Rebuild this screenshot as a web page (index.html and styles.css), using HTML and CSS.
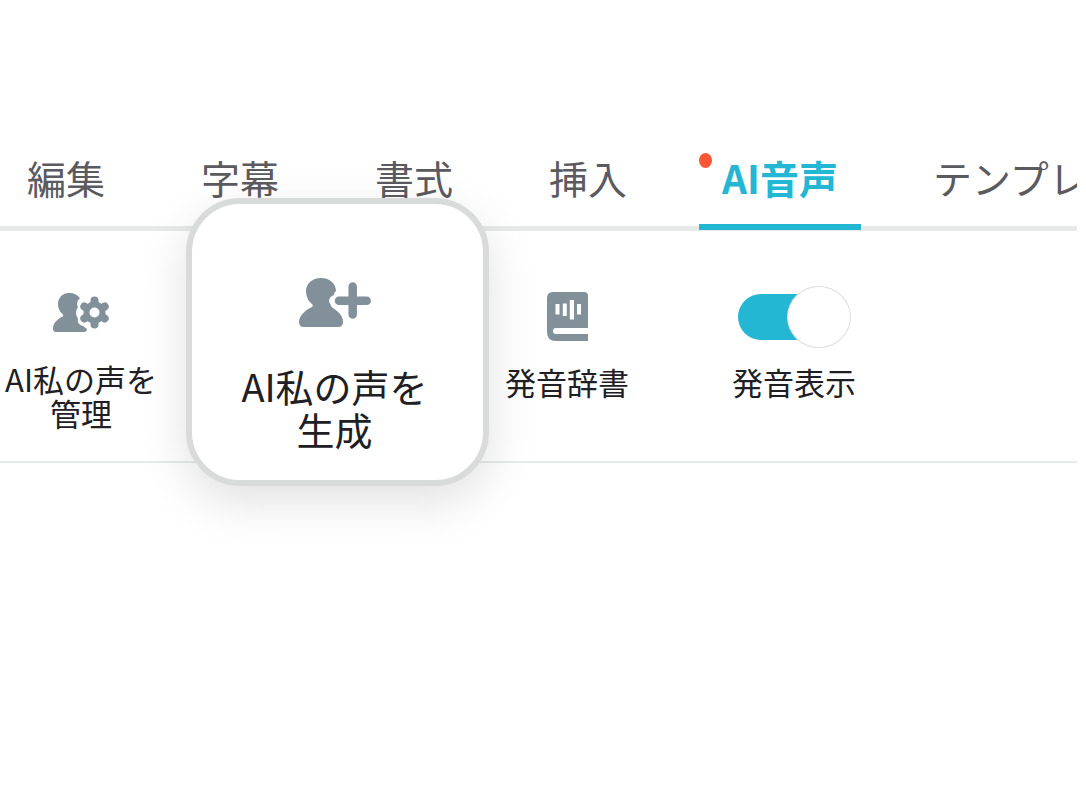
FILE: index.html
```html
<!DOCTYPE html>
<html lang="ja">
<head>
<meta charset="utf-8">
<title>AI音声</title>
<link rel="stylesheet" href="styles.css">
</head>
<body>
<div class="app">
  <nav class="tabs">
    <button class="tab" type="button">編集</button>
    <button class="tab" type="button">字幕</button>
    <button class="tab" type="button">書式</button>
    <button class="tab" type="button">挿入</button>
    <button class="tab tab-active" type="button">AI音声</button>
    <button class="tab" type="button">テンプレ</button>
  </nav>
  <div class="toolbar">
    <button class="tool tool-manage" type="button">
      <span class="tool-icon">
        <svg width="58" height="41" viewBox="0 0 58 41" aria-hidden="true">
          <path fill="currentColor" d="M17 1C22 1 26 3 28 6.500C25 8 24.500 12 26 15.500C23.500 18 23.500 23 26 26.500C25 30 27 33 31 34L35 37Q35 40 32 40H4Q1 40 1 36.500C1 31 6 26.500 11 24.500C11.500 23.500 11 22.500 10 21.500C7 19 6 15 6 12C6 5.500 11 1 17 1Z"/>
          <g transform="translate(42.500 20.500)" fill="none" stroke="currentColor">
            <circle r="8" stroke-width="6"/>
            <path stroke-width="8" stroke-linecap="round" d="M0-9.500V-12M0 9.500V12M8.200-4.800L10.200-6M8.200 4.800L10.200 6M-8.200-4.800L-10.200-6M-8.200 4.800L-10.200 6"/>
          </g>
        </svg>
      </span>
      <span class="tool-label">AI私の声を<br>管理</span>
    </button>
    <div class="slot">
      <button class="card" type="button">
        <svg width="72" height="50" viewBox="0 0 72 50" aria-hidden="true">
          <path fill="currentColor" d="M22 0C31 0 37 6 37 13C35 15 35 16 35 17C32 18 30 20 30 23C30 25 32 26 32 28C33 30 36 31 38 33C42 36 44 40 44 44Q44 49 39 49H5Q0 49 0 44C0 37 8 31 13 29C14 28 14 27 13 26C9 23 7 18 7 13C7 6 13 0 22 0Z"/>
          <path fill="none" stroke="currentColor" stroke-width="8.500" stroke-linecap="round" d="M40 22.700H67.700M53.700 8.500V36.500"/>
        </svg>
        <span class="card-label">AI私の声を<br>生成</span>
      </button>
    </div>
    <button class="tool" type="button">
      <span class="tool-icon">
        <svg width="41" height="49" viewBox="0 0 41 49" aria-hidden="true">
          <path fill="currentColor" fill-rule="evenodd" d="M6 0H37Q41 0 41 4V36H9Q6 36 6 39T9 42H41V49H9Q0 49 0 40V6Q0 0 6 0ZM8.500 12V22.500H12.500V12ZM15.800 11.500V24H19.800V11.500ZM22.800 8V27.500H27V8ZM30 12V22.500H34V12Z"/>
        </svg>
      </span>
      <span class="tool-label">発音辞書</span>
    </button>
    <label class="tool" for="reading">
      <input class="switch" id="reading" type="checkbox" checked>
      <span class="tool-label">発音表示</span>
    </label>
  </div>
</div>
</body>
</html>
```
FILE: styles.css
```css
* {
  box-sizing: border-box;
}

body {
  margin: 0;
  background: #fff;
  font-family: "Noto Sans CJK JP", sans-serif;
}

button {
  margin: 0;
  padding: 0;
  border: 0;
  background: none;
  font: inherit;
}

.app {
  min-height: 100vh;
  margin-right: 9px;
  padding-top: 151px;
}

.tabs {
  display: flex;
  gap: 48px;
  padding-left: 3px;
  border-bottom: 5px solid #e8eaea;
  overflow: clip;
  overflow-clip-margin: border-box;
}

.tab {
  position: relative;
  flex: none;
  padding: 0 24px 23px;
  color: #5b5b5f;
  font-size: 39px;
  line-height: 52px;
  white-space: nowrap;
}

.tab-active {
  padding: 0 23px 23px;
  color: #24b7d3;
  font-weight: 700;
}

.tab-active::before {
  content: "";
  position: absolute;
  top: 2px;
  left: 0;
  width: 13px;
  height: 15px;
  border-radius: 50%;
  background: #fb5633;
}

.tab-active::after {
  content: "";
  position: absolute;
  right: 0;
  bottom: -4px;
  left: 0;
  height: 6px;
  background: #24b7d3;
}

.toolbar {
  display: grid;
  grid-template-columns: 186px 303px 156px 298px;
  align-items: start;
  padding: 55px 0 31px;
  border-bottom: 2px solid #e8eaea;
}

.tool {
  display: flex;
  flex-direction: column;
  align-items: center;
  gap: 19px;
  color: #202024;
}

.tool-icon {
  display: flex;
  align-items: center;
  height: 60px;
  color: #82909a;
}

.tool-manage {
  gap: 24px;
  padding-right: 24px;
}

.tool-manage .tool-icon {
  height: 52px;
}

.tool-label {
  font-size: 31px;
  line-height: 34px;
  text-align: center;
  white-space: nowrap;
}

.slot {
  position: relative;
}

.card {
  position: absolute;
  top: -88px;
  left: 0;
  display: flex;
  flex-direction: column;
  align-items: center;
  gap: 36px;
  width: 100%;
  padding: 74px 6px 30px 0;
  border: 6px solid #d9dada;
  border-radius: 54px;
  background: #fff;
  box-shadow: 0 16px 48px rgba(0, 0, 0, 0.12);
  color: #82909a;
}

.card-label {
  color: #202024;
  font-size: 38px;
  line-height: 43px;
  white-space: nowrap;
}

.switch {
  appearance: none;
  display: grid;
  align-items: center;
  width: 113px;
  height: 60px;
  margin: 0;
}

.switch::before,
.switch::after {
  content: "";
  grid-area: 1 / 1;
}

.switch::before {
  width: 100px;
  height: 46px;
  border-radius: 23px;
  background: #24b7d3;
}

.switch::after {
  justify-self: end;
  width: 62px;
  height: 60px;
  border: 1px solid #dcdede;
  border-radius: 50%;
  background: #fff;
}
```
